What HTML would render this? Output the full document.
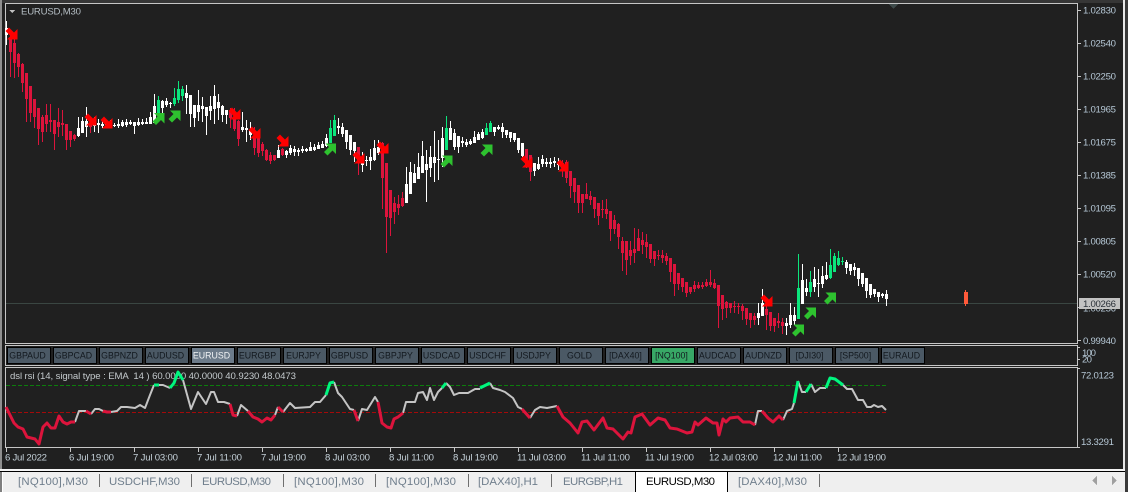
<!DOCTYPE html>
<html><head><meta charset="utf-8"><style>
html,body{margin:0;padding:0;background:#202020;width:1128px;height:492px;overflow:hidden}
svg{display:block;font-family:"Liberation Sans",sans-serif}
.l{shape-rendering:crispEdges}
.ax{fill:#b6c8d6;font-size:9.6px}
.dt{fill:#c4d0d8;font-size:9.6px}
.btn{fill:#12181e;font-size:8.8px;text-anchor:middle}
.tab{fill:#6f7e8c;font-size:11.4px}
</style></head><body>
<svg width="1128" height="492" viewBox="0 0 1128 492" xmlns="http://www.w3.org/2000/svg">
<defs>
<path id="g" d="M3.500 12L8.500 7L12 10.500V0H1.500L5 3.500L0 8.500Z" fill="#2ec22f"/>
<path id="r" d="M3.500 0L8.500 5L12 1.500V12H1.500L5 8.500L0 3.500Z" fill="#ff0000"/>
</defs>
<rect width="1128" height="492" fill="#202020"/>
<rect x="0" y="0" width="1128" height="3" fill="#363636"/>
<rect x="0" y="0" width="2" height="470" fill="#8f8f8f"/>
<rect x="1123" y="0" width="2" height="470" fill="#e8e8e8"/>
<rect x="1125" y="0" width="3" height="492" fill="#3a3a3a"/>

<g class="l" fill="none" stroke="#c6c6c6">
<rect x="5.500" y="3.500" width="1072" height="340"/>
<rect x="5.500" y="345.500" width="1072" height="20"/>
<rect x="5.500" y="367.500" width="1072" height="80"/>
<path d="M1077 10.500h4M1077 43.500h4M1077 76.500h4M1077 109.500h4M1077 142.500h4M1077 175.500h4M1077 208.500h4M1077 241.500h4M1077 274.500h4M1077 307.500h4M1077 340.500h4M1077 347.500h3M1077 359.500h3M1077 368.500h3M1077 447.500h3"/>
<path d="M6.500 448v4M70.500 448v4M134.500 448v4M198.500 448v4M262.500 448v4M326.500 448v4M390.500 448v4M454.500 448v4M518.500 448v4M582.500 448v4M646.500 448v4M710.500 448v4M774.500 448v4M838.500 448v4"/>
</g>
<path class="l" d="M889 4H898L893.500 9Z" fill="#3e4a4a"/>
<rect class="l" x="6" y="303" width="1071" height="1" fill="#3a4642"/>

<path class="l" d="M9 10h6l-3 3z" fill="#c0c0c0"/>
<text x="21" y="14.500" font-size="9.600" fill="#b5bec4" textLength="60">EURUSD,M30</text>

<!-- white candles -->
<path class="l" fill="none" stroke="#fff" stroke-width="1" d="M6.500 21V45M78.500 117V137M82.500 117V133M86.500 107V137M94.500 117V132M98.500 119V133M102.500 121V128M106.500 122V127M110.500 120V128M114.500 123V127M118.500 119V128M122.500 120V127M126.500 119V127M130.500 120V125M134.500 122V134M138.500 118V126M142.500 119V125M146.500 118V124M150.500 112V124M154.500 94V122M162.500 100V119M166.500 98V107M170.500 102V108M186.500 85V114M190.500 95V127M194.500 105V127M198.500 90V121M202.500 97V122M206.500 107V135M210.500 96V120M214.500 85V124M218.500 94V120M222.500 105V122M226.500 110V124M242.500 112V132M246.500 120V142M250.500 122V140M278.500 145V158M286.500 150V158M290.500 145V155M294.500 146V156M298.500 148V156M302.500 146V153M306.500 148V152M310.500 142V151M314.500 144V151M318.500 142V149M322.500 141V148M326.500 134V147M338.500 118V134M342.500 123V137M346.500 130V149M350.500 135V155M354.500 142V162M362.500 152V172M366.500 156V166M370.500 149V170M374.500 140V161M378.500 140V155M406.500 167V203M410.500 162V194M414.500 164V183M418.500 153V179M422.500 141V173M426.500 150V202M430.500 146V177M434.500 131V182M438.500 140V180M442.500 127V167M450.500 121V140M454.500 129V150M458.500 136V153M462.500 137V147M466.500 139V147M470.500 139V145M474.500 131V143M478.500 132V140M482.500 129V139M494.500 127V136M498.500 125V130M502.500 123V138M506.500 130V138M510.500 132V142M514.500 133V142M518.500 138V153M522.500 143V157M534.500 163V176M538.500 157V170M542.500 155V167M546.500 158V167M550.500 158V168M554.500 157V167M558.500 158V170M758.500 303V325M762.500 289V316M786.500 318V335M790.500 303V328M794.500 307V325M802.500 264V304M806.500 279V296M814.500 267V292M818.500 269V297M822.500 266V288M826.500 262V280M846.500 260V274M850.500 264V275M854.500 263V276M858.500 268V286M862.500 273V287M866.500 278V298M870.500 284V298M874.500 289V297M878.500 292V302M882.500 293V298M886.500 290V306"/>
<path class="l" fill="none" stroke="#fff" stroke-width="3" d="M6.500 28V35M78.500 128V136M82.500 121V133M86.500 121V127M94.500 124V126M98.500 123V125M102.500 124V126M106.500 124V125M110.500 124V126M114.500 125V126M118.500 124V126M122.500 122V126M126.500 122V125M130.500 122V124M134.500 122V126M138.500 122V125M142.500 122V124M146.500 122V124M150.500 117V124M154.500 106V123M162.500 101V108M166.500 101V105M170.500 103V104M186.500 93V98M190.500 95V114M194.500 105V118M198.500 105V112M202.500 106V109M206.500 107V116M210.500 106V111M214.500 96V109M218.500 102V108M222.500 106V115M226.500 110V115M242.500 127V130M246.500 128V130M250.500 130V135M278.500 150V158M286.500 151V155M290.500 148V153M294.500 149V152M298.500 150V152M302.500 149V151M306.500 149V151M310.500 147V151M314.500 147V150M318.500 145V149M322.500 144V148M326.500 138V146M338.500 126V128M342.500 127V134M346.500 130V142M350.500 135V150M354.500 142V151M362.500 162V165M366.500 160V161M370.500 157V161M374.500 148V160M378.500 147V153M406.500 184V203M410.500 172V194M414.500 173V183M418.500 167V179M422.500 156V173M426.500 164V170M430.500 157V168M434.500 157V163M438.500 159V160M442.500 138V158M450.500 128V140M454.500 133V147M458.500 136V147M462.500 141V143M466.500 142V145M470.500 141V144M474.500 137V143M478.500 134V140M482.500 132V138M494.500 127V132M498.500 127V129M502.500 127V132M506.500 130V135M510.500 132V138M514.500 133V140M518.500 138V150M522.500 143V156M534.500 163V171M538.500 164V169M542.500 159V164M546.500 162V164M550.500 162V164M554.500 161V163M558.500 163V165M758.500 313V318M762.500 303V316M786.500 323V326M790.500 315V325M794.500 315V321M802.500 280V304M806.500 288V292M814.500 279V287M818.500 283V284M822.500 276V284M826.500 275V279M846.500 262V268M850.500 264V271M854.500 267V270M858.500 268V279M862.500 273V284M866.500 278V291M870.500 284V295M874.500 289V294M878.500 292V297M882.500 294V296M886.500 294V299"/>

<!-- red candles -->
<path class="l" fill="none" stroke="#dc143c" stroke-width="1" d="M10.500 33V77M14.500 38V78M18.500 53V77M22.500 63V92M26.500 73V122M30.500 86V122M34.500 99V128M38.500 108V145M42.500 115V142M46.500 104V132M50.500 104V132M54.500 120V150M58.500 108V137M62.500 110V136M66.500 124V150M70.500 131V147M74.500 134V141M90.500 124V133M230.500 108V128M234.500 108V131M238.500 120V146M254.500 127V155M258.500 137V157M262.500 142V156M266.500 149V161M270.500 152V164M274.500 155V161M282.500 148V156M358.500 147V175M382.500 142V209M386.500 163V253M390.500 190V236M394.500 197V224M398.500 195V215M402.500 192V207M526.500 149V168M530.500 155V181M562.500 160V177M566.500 160V183M570.500 171V198M574.500 178V203M578.500 185V213M582.500 194V213M586.500 183V199M590.500 191V205M594.500 197V218M598.500 203V225M602.500 200V218M606.500 199V219M610.500 211V241M614.500 215V234M618.500 223V249M622.500 237V271M626.500 242V275M630.500 241V265M634.500 228V263M638.500 229V251M642.500 232V254M646.500 234V258M650.500 244V263M654.500 251V266M658.500 250V260M662.500 250V263M666.500 253V265M670.500 258V282M674.500 264V296M678.500 273V290M682.500 278V292M686.500 282V297M690.500 287V294M694.500 281V292M698.500 282V289M702.500 282V289M706.500 279V287M710.500 270V287M714.500 279V289M718.500 285V328M722.500 295V320M726.500 301V318M730.500 303V313M734.500 301V313M738.500 303V314M742.500 304V320M746.500 308V325M750.500 313V328M754.500 313V325M766.500 303V330M770.500 312V331M774.500 318V332M778.500 313V328M782.500 318V334"/>
<path class="l" fill="none" stroke="#dc143c" stroke-width="3" d="M10.500 38V52M14.500 43V63M18.500 54V67M22.500 64V83M26.500 73V99M30.500 86V113M34.500 99V117M38.500 108V129M42.500 117V132M46.500 115V124M50.500 120V122M54.500 120V134M58.500 122V127M62.500 123V125M66.500 124V140M70.500 131V140M74.500 135V139M90.500 124V127M230.500 110V118M234.500 118V129M238.500 121V139M254.500 137V148M258.500 138V153M262.500 144V151M266.500 150V160M270.500 155V161M274.500 155V160M282.500 149V155M358.500 147V163M382.500 143V178M386.500 163V217M390.500 190V218M394.500 203V212M398.500 204V208M402.500 198V206M526.500 149V165M530.500 155V172M562.500 163V168M566.500 162V178M570.500 171V186M574.500 178V192M578.500 185V203M582.500 194V203M586.500 194V199M590.500 196V200M594.500 197V209M598.500 203V216M602.500 209V210M606.500 209V214M610.500 211V229M614.500 220V229M618.500 224V237M622.500 241V253M626.500 241V260M630.500 250V256M634.500 249V253M638.500 238V251M642.500 240V245M646.500 242V247M650.500 244V259M654.500 251V259M658.500 255V256M662.500 255V258M666.500 256V261M670.500 258V272M674.500 264V284M678.500 273V284M682.500 278V287M686.500 282V293M690.500 287V292M694.500 285V289M698.500 285V288M702.500 285V287M706.500 282V286M710.500 282V285M714.500 283V288M718.500 285V306M722.500 295V309M726.500 302V308M730.500 303V308M734.500 306V307M738.500 306V307M742.500 306V311M746.500 308V319M750.500 313V320M754.500 316V320M766.500 309V315M770.500 312V326M774.500 318V326M778.500 321V323M782.500 322V326"/>

<!-- green candles -->
<path class="l" fill="none" stroke="#0be57c" stroke-width="1" d="M158.500 96V120M174.500 88V106M178.500 81V103M182.500 86V101M330.500 120V143M334.500 115V136M446.500 116V150M486.500 123V135M490.500 121V132M798.500 254V319M810.500 271V297M830.500 249V279M834.500 253V272M838.500 251V266M842.500 257V265"/>
<path class="l" fill="none" stroke="#0be57c" stroke-width="3" d="M158.500 100V113M174.500 98V104M178.500 89V100M182.500 89V96M330.500 128V143M334.500 120V136M446.500 128V150M486.500 128V135M490.500 123V132M798.500 288V319M810.500 282V292M830.500 265V278M834.500 256V272M838.500 258V265M842.500 261V262"/>

<!-- lone candle -->
<path class="l" fill="none" stroke="#ff5a3a" d="M965.500 290V306"/>
<rect class="l" x="964" y="292" width="4" height="12" fill="#ff5a3a"/>

<!-- arrows -->
<use href="#r" x="5.500" y="27.500"/><use href="#r" x="84.500" y="113.500"/><use href="#r" x="100.500" y="116.500"/><use href="#r" x="228.500" y="107.500"/><use href="#r" x="248.500" y="126.500"/><use href="#r" x="276.500" y="134.500"/><use href="#r" x="352.500" y="151.500"/><use href="#r" x="376.500" y="141.500"/><use href="#r" x="520.500" y="155.500"/><use href="#r" x="556.500" y="159.500"/><use href="#r" x="760.500" y="294.500"/>
<use href="#g" x="152.500" y="113"/><use href="#g" x="168.500" y="110.500"/><use href="#g" x="324" y="143.500"/><use href="#g" x="440.500" y="155.500"/><use href="#g" x="480.500" y="144.500"/><use href="#g" x="792" y="324.500"/><use href="#g" x="804" y="307.500"/><use href="#g" x="824" y="292.500"/>

<!-- axis labels -->
<g class="ax">
<text x="1083" y="13.500" textLength="33">1.02830</text>
<text x="1083" y="46.500" textLength="33">1.02540</text>
<text x="1083" y="79.500" textLength="33">1.02250</text>
<text x="1083" y="112.500" textLength="33">1.01965</text>
<text x="1083" y="145.500" textLength="33">1.01675</text>
<text x="1083" y="178.500" textLength="33">1.01385</text>
<text x="1083" y="211.500" textLength="33">1.01095</text>
<text x="1083" y="244.500" textLength="33">1.00805</text>
<text x="1083" y="277.500" textLength="33">1.00520</text>
<text x="1083" y="311.500" textLength="33">1.00256</text>
<text x="1083" y="344" textLength="33">0.99940</text>
<text x="1082" y="356" textLength="14">100</text>
<text x="1082" y="362.500" textLength="10">20</text>
<text x="1081" y="378.500" textLength="33">72.0123</text>
<text x="1081" y="445" textLength="33">13.3291</text>
</g>
<rect class="l" x="1079" y="298" width="41" height="11" fill="#c2c2c2"/>
<text x="1083" y="307" font-size="9.600" fill="#2a3038" textLength="33">1.00266</text>

<!-- buttons -->
<g class="l" stroke="#000" stroke-width="1" fill="#4b5965">
<rect x="7.500" y="347.500" width="43" height="16"/><rect x="53.500" y="347.500" width="43" height="16"/><rect x="99.500" y="347.500" width="43" height="16"/><rect x="145.500" y="347.500" width="43" height="16"/>
<rect x="191.500" y="347.500" width="43" height="16" fill="#6c7b8a"/>
<rect x="237.500" y="347.500" width="43" height="16"/><rect x="283.500" y="347.500" width="43" height="16"/><rect x="329.500" y="347.500" width="43" height="16"/><rect x="375.500" y="347.500" width="43" height="16"/><rect x="421.500" y="347.500" width="43" height="16"/><rect x="467.500" y="347.500" width="43" height="16"/><rect x="513.500" y="347.500" width="43" height="16"/><rect x="559.500" y="347.500" width="43" height="16"/><rect x="605.500" y="347.500" width="43" height="16"/>
<rect x="651.500" y="347.500" width="43" height="16" fill="#38a866"/>
<rect x="697.500" y="347.500" width="43" height="16"/><rect x="743.500" y="347.500" width="43" height="16"/><rect x="789.500" y="347.500" width="43" height="16"/><rect x="835.500" y="347.500" width="43" height="16"/><rect x="881.500" y="347.500" width="43" height="16"/>
</g>
<g class="btn">
<text x="27.500" y="358.500">GBPAUD</text><text x="73.500" y="358.500">GBPCAD</text><text x="119.500" y="358.500">GBPNZD</text><text x="165.500" y="358.500">AUDUSD</text>
<text x="211.500" y="358.500" style="fill:#f2f4f6">EURUSD</text>
<text x="257.500" y="358.500">EURGBP</text><text x="303.500" y="358.500">EURJPY</text><text x="349.500" y="358.500">GBPUSD</text><text x="395.500" y="358.500">GBPJPY</text><text x="441.500" y="358.500">USDCAD</text><text x="487.500" y="358.500">USDCHF</text><text x="533.500" y="358.500">USDJPY</text><text x="579.500" y="358.500">GOLD</text><text x="625.500" y="358.500">[DAX40]</text><text x="671.500" y="358.500">[NQ100]</text><text x="717.500" y="358.500">AUDCAD</text><text x="763.500" y="358.500">AUDNZD</text><text x="809.500" y="358.500">[DJI30]</text><text x="855.500" y="358.500">[SP500]</text><text x="901.500" y="358.500">EURAUD</text>
</g>

<!-- RSI levels -->
<path class="l" fill="none" stroke="#0c7d0c" stroke-dasharray="4 2" d="M6 385.500H886"/>
<path class="l" fill="none" stroke="#a30a0a" stroke-dasharray="4 2" d="M6 412.500H886"/>

<text x="10" y="379" font-size="9.600" fill="#c4cacd" xml:space="preserve" textLength="286">dsl rsi (14, signal type : EMA  14 ) 60.0000 40.0000 40.9230 48.0473</text>

<!-- RSI line -->
<g fill="none" stroke-linejoin="round">
<path stroke="#c4c4c4" stroke-width="2" d="M75 422L79 411L86 411M91 414L95 409L99 409L103 411M111 412L117 411L121 407L127 407L135 408L140 405L145 408L150 395L154 385M159 385L163 385L170 388M183 380L191 409L198 392L206 404L211 392L214 392L218 402L224 402L230 404M237 416L241 405L248 411M275 415L278 407M283 412L290 403L295 408L310 407L315 402L320 402L326 395M334 382L338 393L342 397L350 409L354 410M358 421L362 409L367 410L375 397L378 402M403 413L406 402L415 402L418 393L423 392L427 400L430 388L434 400L438 392L442 388M446 383L450 387L454 395L459 393L468 393L475 389L480 389M490 383L493 388L500 390L505 392L513 398L518 407L522 409M530 418L535 410L540 407L547 408L557 406M755 425L758 411L762 411M783 420L787 411L792 409L794 403M798 381L802 392L806 392M811 384L815 392L820 388L826 388M843 385L847 389L852 389L858 400L863 400L867 407L871 407L874 405L878 407L882 406L886 410"/>
<path stroke="#dc143c" stroke-width="3" d="M6 407L10 415L14 423L18 427L23 429L27 437L31 438L35 439L39 444L43 427L47 423L51 428L55 428L59 416L63 422L67 424L71 422L75 422M86 411L91 414M103 411L107 412L111 412M230 404L233 415L237 416M248 411L253 417L258 419L262 422L267 418L271 420L275 415M278 407L283 412M354 410L358 421M378 402L382 423L387 427L391 428L394 419L398 417L403 413M522 409L530 418M557 406L563 417L570 423L578 433L582 422L587 421L594 430L603 418L607 428L613 429L618 434L623 439L628 432L631 433L635 417L642 414L650 425L658 418L665 420L670 428L677 429L687 433L692 432L695 422L698 425L706 418L713 423L717 423L719 435L723 419L726 422L730 418L738 417L743 422L750 422L755 425M762 411L768 418L773 422L779 416L783 420"/>
<path stroke="#00f57f" stroke-width="3" d="M154 385L159 385M170 388L174 383L178 372L183 380M326 395L330 383L334 382M442 388L446 383M480 388L490 383M794 403L798 381M806 392L811 384M826 388L830 378L835 379L843 385"/>
</g>

<!-- dates -->
<g class="dt">
<text x="5" y="460.500" textLength="42">6 Jul 2022</text>
<text x="69" y="460.500" textLength="45">6 Jul 19:00</text>
<text x="133" y="460.500" textLength="45">7 Jul 03:00</text>
<text x="197" y="460.500" textLength="45">7 Jul 11:00</text>
<text x="261" y="460.500" textLength="45">7 Jul 19:00</text>
<text x="325" y="460.500" textLength="45">8 Jul 03:00</text>
<text x="389" y="460.500" textLength="45">8 Jul 11:00</text>
<text x="453" y="460.500" textLength="45">8 Jul 19:00</text>
<text x="517" y="460.500" textLength="49">11 Jul 03:00</text>
<text x="581" y="460.500" textLength="49">11 Jul 11:00</text>
<text x="645" y="460.500" textLength="49">11 Jul 19:00</text>
<text x="709" y="460.500" textLength="49">12 Jul 03:00</text>
<text x="773" y="460.500" textLength="49">12 Jul 11:00</text>
<text x="837" y="460.500" textLength="49">12 Jul 19:00</text>
</g>

<!-- tab bar -->
<rect class="l" x="0" y="469" width="1125" height="2" fill="#f4f4f4"/>
<rect class="l" x="0" y="471" width="1125" height="1" fill="#000"/>
<rect class="l" x="0" y="472" width="1125" height="20" fill="#efefef"/>
<rect class="l" x="0" y="472" width="2" height="20" fill="#7f7f7f"/>
<rect class="l" x="2" y="472" width="1" height="20" fill="#fff"/>
<rect class="l" x="635" y="472" width="92" height="20" fill="#fff"/>
<path class="l" fill="none" stroke="#000" d="M635.500 471V492M727.500 471V492"/>
<path class="l" fill="none" stroke="#6f6f6f" d="M99.500 474V487M191.500 474V487M283.500 474V487M375.500 474V487M468.500 474V487M551.500 474V487M819.500 474V487"/>
<g class="tab">
<text x="18" y="485" textLength="70">[NQ100],M30</text>
<text x="109" y="485" textLength="71">USDCHF,M30</text>
<text x="202" y="485" textLength="69">EURUSD,M30</text>
<text x="294" y="485" textLength="70">[NQ100],M30</text>
<text x="386" y="485" textLength="70">[NQ100],M30</text>
<text x="478" y="485" textLength="60">[DAX40],H1</text>
<text x="563" y="485" textLength="60">EURGBP,H1</text>
<text x="646" y="485" textLength="69" style="fill:#000">EURUSD,M30</text>
<text x="738" y="485" textLength="69">[DAX40],M30</text>
</g>
<path class="l" d="M1097 476V485L1092 480.500Z" fill="#a0a0a0"/>
<path class="l" d="M1112 476V485L1117 480.500Z" fill="#a0a0a0"/>
</svg>
</body></html>
